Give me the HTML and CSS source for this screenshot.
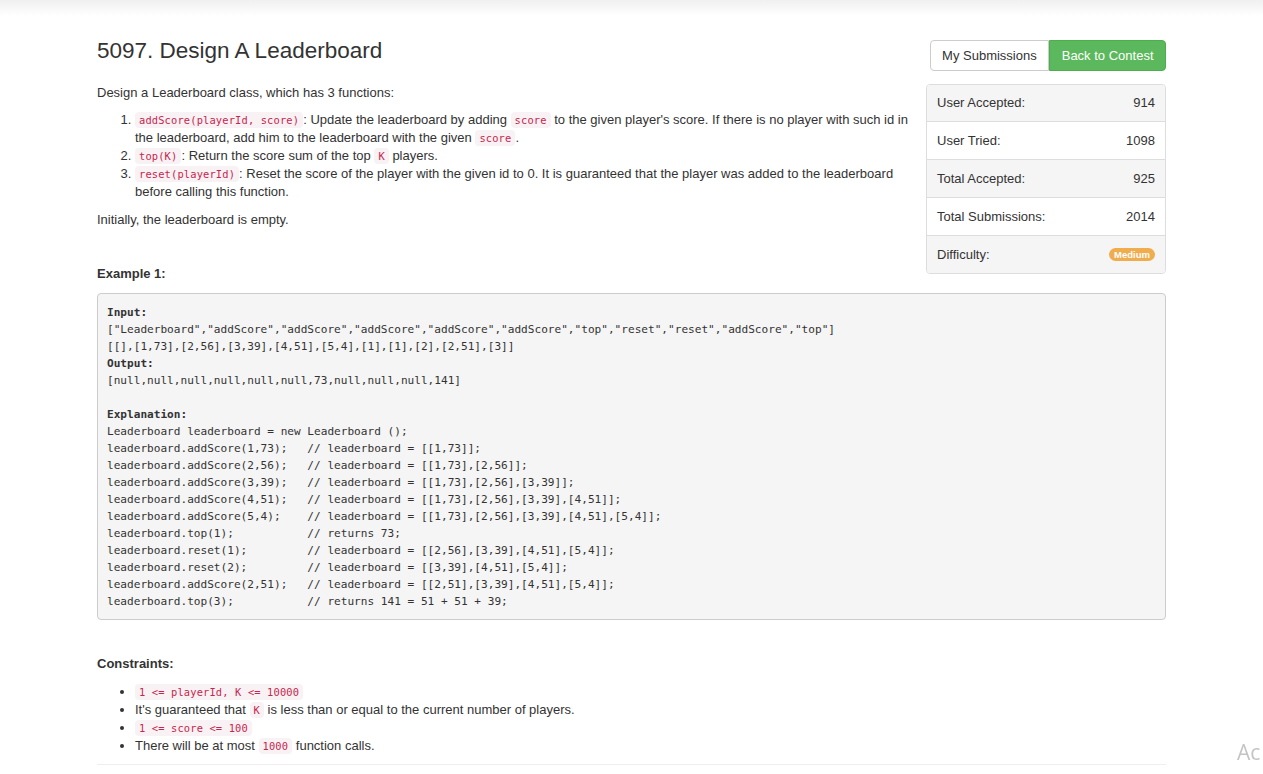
FILE: index.html
```html
<!DOCTYPE html>
<html>
<head>
<meta charset="utf-8">
<title>5097. Design A Leaderboard</title>
<link rel="stylesheet" href="styles.css">
</head>
<body>
<div class="page">
  <div class="top-row">
    <div class="main-col">
      <h3 class="title">5097. Design A Leaderboard</h3>
      <p class="lead">Design a Leaderboard class, which has 3 functions:</p>
      <ol class="funcs">
        <li><code>addScore(playerId, score)</code>: Update the leaderboard by adding <code>score</code> to the given player's score. If there is no player with such id in the leaderboard, add him to the leaderboard with the given <code>score</code>.</li>
        <li><code>top(K)</code>: Return the score sum of the top <code>K</code> players.</li>
        <li><code>reset(playerId)</code>: Reset the score of the player with the given id to 0. It is guaranteed that the player was added to the leaderboard before calling this function.</li>
      </ol>
      <p class="initially">Initially, the leaderboard is empty.</p>
      <p class="section-head">Example 1:</p>
    </div>
    <aside class="side-col">
      <div class="btn-group">
        <a class="btn btn-default">My Submissions</a>
        <a class="btn btn-success">Back to Contest</a>
      </div>
      <ul class="stats">
        <li class="stat"><span>User Accepted:</span><span>914</span></li>
        <li class="stat"><span>User Tried:</span><span>1098</span></li>
        <li class="stat"><span>Total Accepted:</span><span>925</span></li>
        <li class="stat"><span>Total Submissions:</span><span>2014</span></li>
        <li class="stat"><span>Difficulty:</span><span class="badge">Medium</span></li>
      </ul>
    </aside>
  </div>
<pre class="example"><strong>Input:</strong>
["Leaderboard","addScore","addScore","addScore","addScore","addScore","top","reset","reset","addScore","top"]
[[],[1,73],[2,56],[3,39],[4,51],[5,4],[1],[1],[2],[2,51],[3]]
<strong>Output:</strong>
[null,null,null,null,null,null,73,null,null,null,141]

<strong>Explanation:</strong>
Leaderboard leaderboard = new Leaderboard ();
leaderboard.addScore(1,73);   // leaderboard = [[1,73]];
leaderboard.addScore(2,56);   // leaderboard = [[1,73],[2,56]];
leaderboard.addScore(3,39);   // leaderboard = [[1,73],[2,56],[3,39]];
leaderboard.addScore(4,51);   // leaderboard = [[1,73],[2,56],[3,39],[4,51]];
leaderboard.addScore(5,4);    // leaderboard = [[1,73],[2,56],[3,39],[4,51],[5,4]];
leaderboard.top(1);           // returns 73;
leaderboard.reset(1);         // leaderboard = [[2,56],[3,39],[4,51],[5,4]];
leaderboard.reset(2);         // leaderboard = [[3,39],[4,51],[5,4]];
leaderboard.addScore(2,51);   // leaderboard = [[2,51],[3,39],[4,51],[5,4]];
leaderboard.top(3);           // returns 141 = 51 + 51 + 39;
</pre>
  <p class="section-head constraints-head">Constraints:</p>
  <ul class="constraints">
    <li><code>1 &lt;= playerId, K &lt;= 10000</code></li>
    <li>It's guaranteed that <code>K</code> is less than or equal to the current number of players.</li>
    <li><code>1 &lt;= score &lt;= 100</code></li>
    <li>There will be at most <code>1000</code> function calls.</li>
  </ul>
  <hr class="rule">
</div>
<div class="watermark">Ac</div>
</body>
</html>
```

FILE: styles.css
```css
html, body {
  margin: 0;
  padding: 0;
}
body {
  font-family: "Liberation Sans", Arial, Helvetica, sans-serif;
  font-size: 13px;
  line-height: 18px;
  color: #333;
  background: #fff linear-gradient(#f0f0f0, #ffffff 16px) no-repeat;
  background-size: 100% 16px;
  overflow: hidden;
}
.page {
  width: 1069px;
  margin: 0 auto;
  padding-top: 37px;
}
.top-row {
  display: flex;
  gap: 10px;
}
.main-col {
  width: 819px;
}
.side-col {
  width: 240px;
  margin-top: 3px;
}
.title {
  font-size: 22.5px;
  font-weight: 400;
  line-height: 27px;
  margin: 0 0 20px 0;
}
.lead {
  margin: 0 0 9px 0;
}
.funcs {
  margin: 0 0 10px 0;
  padding-left: 38px;
}
.initially {
  margin: 0 0 36px 0;
}
.section-head {
  font-weight: 700;
  margin: 0 0 10px 0;
}
code {
  font-family: "DejaVu Sans Mono", "Liberation Mono", monospace;
  font-size: 10.4px;
  line-height: 1;
  padding: 2px 4px;
  color: #c7254e;
  background: #f9f2f4;
  border-radius: 4px;
  letter-spacing: 0.15px;
}
.btn-group {
  display: flex;
  justify-content: flex-end;
}
.btn {
  display: block;
  padding: 6px 11.5px;
  font-size: 13px;
  line-height: 17px;
  border: 1px solid #ccc;
  cursor: pointer;
}
.btn-default {
  background: #fff;
  color: #333;
  border-radius: 4px 0 0 4px;
}
.btn-success {
  background: #5cb85c;
  border-color: #4cae4c;
  color: #fff;
  border-radius: 0 4px 4px 0;
}
.stats {
  list-style: none;
  margin: 13px 0 0 0;
  padding: 0;
  border: 1px solid #ddd;
  border-radius: 4px;
  overflow: hidden;
}
.stat {
  display: flex;
  justify-content: space-between;
  align-items: center;
  padding: 9.5px 10px;
  border-top: 1px solid #ddd;
}
.stat:first-child {
  border-top: none;
  padding-top: 8.5px;
}
.stat:nth-child(odd) {
  background: #f5f5f5;
}
.badge {
  background: #f0ad4e;
  color: #fff;
  font-size: 9.5px;
  font-weight: 700;
  line-height: 13px;
  padding: 0 5px;
  border-radius: 7px;
}
.example {
  font-family: "DejaVu Sans Mono", "Liberation Mono", monospace;
  font-size: 11.1px;
  line-height: 17px;
  color: #333;
  background: #f5f5f5;
  border: 1px solid #ccc;
  border-radius: 4px;
  padding: 9.5px 9px;
  margin: 0;
  white-space: pre;
}
.constraints-head {
  margin-top: 35px;
  margin-bottom: 10px;
}
.constraints {
  margin: 0 0 9px 0;
  padding-left: 38px;
}
.rule {
  border: 0;
  border-top: 1px solid #eee;
  margin: 0;
}
.watermark {
  position: fixed;
  left: 1237px;
  top: 743px;
  font-family: "Open Sans", "Liberation Sans", sans-serif;
  font-size: 21px;
  color: #c4c4c4;
  white-space: nowrap;
}
```
